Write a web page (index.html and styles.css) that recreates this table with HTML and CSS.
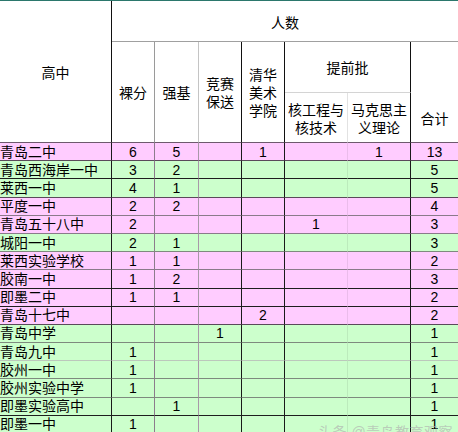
FILE: index.html
```html
<!DOCTYPE html>
<html lang="zh-CN">
<head>
<meta charset="utf-8">
<title>高中录取人数</title>
<link rel="stylesheet" href="styles.css">
</head>
<body>
<table class="grid">
  <colgroup>
    <col class="c-school"><col class="c-n"><col class="c-n2"><col class="c-n"><col class="c-n"><col class="c-w"><col class="c-w"><col class="c-total">
  </colgroup>
  <thead>
    <tr class="h1">
      <th rowspan="3" class="hs">高中</th>
      <th colspan="7" class="hp">人数</th>
    </tr>
    <tr class="h2">
      <th rowspan="2" class="hg1">裸分</th>
      <th rowspan="2" class="hg2">强基</th>
      <th rowspan="2" class="hk">竞赛<br>保送</th>
      <th rowspan="2" class="hk">清华<br>美术<br>学院</th>
      <th colspan="2" class="hq">提前批</th>
      <th class="ht0"></th>
    </tr>
    <tr class="h3">
      <th class="hsub1">核工程与<br>核技术</th>
      <th class="hsub2">马克思主<br>义理论</th>
      <th class="ht">合计</th>
    </tr>
  </thead>
  <tbody>
    <tr class="pink b-mid"><td>青岛二中</td><td>6</td><td>5</td><td></td><td>1</td><td></td><td>1</td><td>13</td></tr>
    <tr class="green b-dark"><td>青岛西海岸一中</td><td>3</td><td>2</td><td></td><td></td><td></td><td></td><td>5</td></tr>
    <tr class="green b-mid"><td>莱西一中</td><td>4</td><td>1</td><td></td><td></td><td></td><td></td><td>5</td></tr>
    <tr class="pink b-soft"><td>平度一中</td><td>2</td><td>2</td><td></td><td></td><td></td><td></td><td>4</td></tr>
    <tr class="pink b-soft"><td>青岛五十八中</td><td>2</td><td></td><td></td><td></td><td>1</td><td></td><td>3</td></tr>
    <tr class="green b-soft"><td>城阳一中</td><td>2</td><td>1</td><td></td><td></td><td></td><td></td><td>3</td></tr>
    <tr class="pink b-soft"><td>莱西实验学校</td><td>1</td><td>1</td><td></td><td></td><td></td><td></td><td>2</td></tr>
    <tr class="pink b-dark"><td>胶南一中</td><td>1</td><td>2</td><td></td><td></td><td></td><td></td><td>3</td></tr>
    <tr class="pink b-dark"><td>即墨二中</td><td>1</td><td>1</td><td></td><td></td><td></td><td></td><td>2</td></tr>
    <tr class="pink b-mid"><td>青岛十七中</td><td></td><td></td><td></td><td>2</td><td></td><td></td><td>2</td></tr>
    <tr class="green b-soft"><td>青岛中学</td><td></td><td></td><td>1</td><td></td><td></td><td></td><td>1</td></tr>
    <tr class="green b-light"><td>青岛九中</td><td>1</td><td></td><td></td><td></td><td></td><td></td><td>1</td></tr>
    <tr class="green b-soft"><td>胶州一中</td><td>1</td><td></td><td></td><td></td><td></td><td></td><td>1</td></tr>
    <tr class="green b-soft"><td>胶州实验中学</td><td>1</td><td></td><td></td><td></td><td></td><td></td><td>1</td></tr>
    <tr class="green b-dark"><td>即墨实验高中</td><td></td><td>1</td><td></td><td></td><td></td><td></td><td>1</td></tr>
    <tr class="green b-soft"><td>即墨一中</td><td>1</td><td></td><td></td><td></td><td></td><td></td><td>1</td></tr>
  </tbody>
</table>
<div class="watermark">头条 @青岛教育观察</div>
</body>
</html>
```

FILE: styles.css
```css
html, body {
  margin: 0;
  padding: 0;
  background: #ffffff;
}
body {
  position: relative;
  width: 458px;
  height: 432px;
  overflow: hidden;
  font-family: "Liberation Sans", "Noto Sans CJK SC", sans-serif;
  font-size: 14px;
  color: #000;
}
.grid {
  border-collapse: separate;
  border-spacing: 0;
  table-layout: fixed;
  width: 458px;
  border-top: 1px solid #2b776c;
}
.c-school { width: 112px; }
.c-n { width: 43px; }
.c-n2 { width: 44px; }
.c-w { width: 63px; }
.c-total { width: 47px; }

th {
  font-weight: normal;
  padding: 0;
  line-height: 18px;
  text-align: center;
  vertical-align: middle;
  background: #fff;
}
.h1 { height: 41px; }
.h2 { height: 51px; }
.h3 { height: 50px; }

.hs { border-right: 1px solid #111; border-bottom: 1px solid #6e5a6e; padding-top: 2px; }
.hp { border-bottom: 1px solid #a0a0a0; padding-top: 3px; }
.hg1 { border-right: 1px solid #9a9a9a; border-bottom: 1px solid #6e5a6e; padding-top: 2px; }
.hg2 { border-right: 1px solid #c4c4c4; border-bottom: 1px solid #6e5a6e; padding-top: 2px; }
.hk { border-right: 1px solid #111; border-bottom: 1px solid #6e5a6e; padding-top: 2px; }
.hq { border-right: 1px solid #111; border-bottom: 1px solid #d4d4d4; padding-top: 2px; }
.hsub1 { border-right: 1px solid #e2e2e2; border-bottom: 1px solid #6e5a6e; padding-top: 2px; }
.hsub2 { border-right: 1px solid #111; border-bottom: 1px solid #6e5a6e; padding-top: 2px; }
.ht { border-bottom: 1px solid #6e5a6e; padding-top: 2px; }

tbody tr { height: 18.2px; }
td {
  padding: 0;
  line-height: 16px;
  text-align: center;
  vertical-align: middle;
  white-space: nowrap;
  overflow: hidden;
  border-bottom: 1px solid var(--rb);
}
td:nth-child(1) { text-align: left; border-right: 1px solid #1a1a1a; }
td:nth-child(2) { border-right: 1px solid #8c7c8c; }
td:nth-child(3) { border-right: 1px solid #a898a8; }
td:nth-child(4) { border-right: 1px solid #1a1a1a; }
td:nth-child(5) { border-right: 1px solid #1a1a1a; }
td:nth-child(6) { border-right: 1px solid rgba(0, 0, 0, 0.08); }
td:nth-child(7) { border-right: 1px solid #1a1a1a; }

.pink td { background: #ffccff; }
.green td { background: #ccffcc; }

.b-dark { --rb: #1e1e1e; }
.b-mid { --rb: #5a4a5a; }
.b-soft { --rb: #8a7a8a; }
.b-light { --rb: #bcc8bc; }
.green.b-soft { --rb: #7e8a7e; }

.watermark {
  position: absolute;
  left: 318px;
  top: 421px;
  font-size: 14px;
  color: rgba(175, 175, 175, 0.65);
  white-space: nowrap;
  letter-spacing: 0.5px;
}
```
